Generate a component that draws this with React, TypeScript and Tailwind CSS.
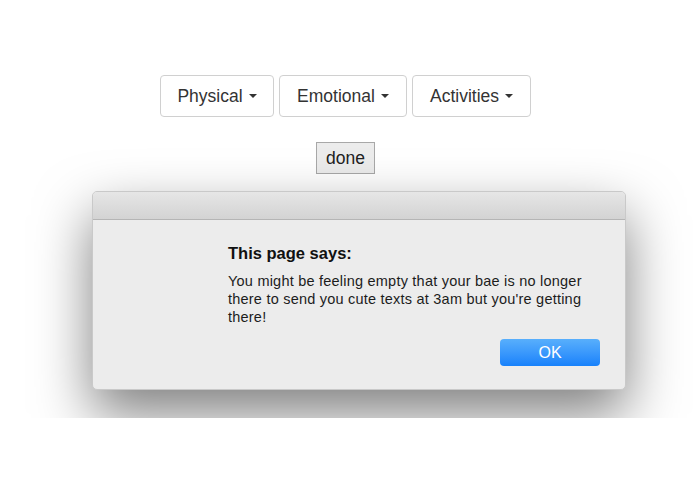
import React from "react";

function Caret() {
  return (
    <span className="ml-[6px] inline-block h-0 w-0 border-x-[4px] border-t-[4px] border-x-transparent border-t-[#333] align-middle" />
  );
}

function MenuButton({ label, width }: { label: string; width: string }) {
  return (
    <button
      className={`flex h-[42px] ${width} items-center justify-center rounded-[4px] border border-[#d0d0d0] bg-white text-[17.5px] text-[#333]`}
    >
      {label}
      <Caret />
    </button>
  );
}

export default function App() {
  return (
    <div
      className="h-[494px] w-[695px] bg-white"
      style={{ fontFamily: '"Liberation Sans", Arial, sans-serif' }}
    >
      <div className="relative h-[418px] overflow-hidden">
        <div className="flex justify-center gap-[5px] pr-[4px] pt-[75px]">
          <MenuButton label="Physical" width="w-[114px]" />
          <MenuButton label="Emotional" width="w-[128px]" />
          <MenuButton label="Activities" width="w-[119px]" />
        </div>
        <div className="mt-[25px] flex justify-center pr-[4px]">
          <button className="h-[32px] w-[59px] border border-[#a8a8a8] bg-[#ececec] text-[17.5px] text-[#222]">
            done
          </button>
        </div>

        <div className="absolute left-[92px] top-[191px] flex h-[199px] w-[534px] flex-col overflow-hidden rounded-[5px] border border-[#c9c9c9] bg-[#ececec] shadow-[0_24px_55px_rgba(0,0,0,0.5)]">
          <div className="h-[28px] shrink-0 border-b border-[#b5b5b5] bg-gradient-to-b from-[#e6e6e6] to-[#d3d3d3]" />
          <div className="flex flex-1 flex-col pl-[135px] pr-[25px] pt-[23px]">
            <div className="text-[16.5px] font-bold leading-[20px] text-[#111]">This page says:</div>
            <p className="mt-[9px] w-[372px] text-[14.5px] leading-[18px] tracking-[0.22px] text-[#1c1c1c]">
              You might be feeling empty that your bae is no longer there to send you cute texts at 3am but you're
              getting there!
            </p>
            <div className="mt-[13px] flex justify-end">
              <button className="h-[27px] w-[100px] rounded-[4px] bg-gradient-to-b from-[#58affc] to-[#1681fb] text-[16px] text-white">
                OK
              </button>
            </div>
          </div>
        </div>
      </div>
    </div>
  );
}
